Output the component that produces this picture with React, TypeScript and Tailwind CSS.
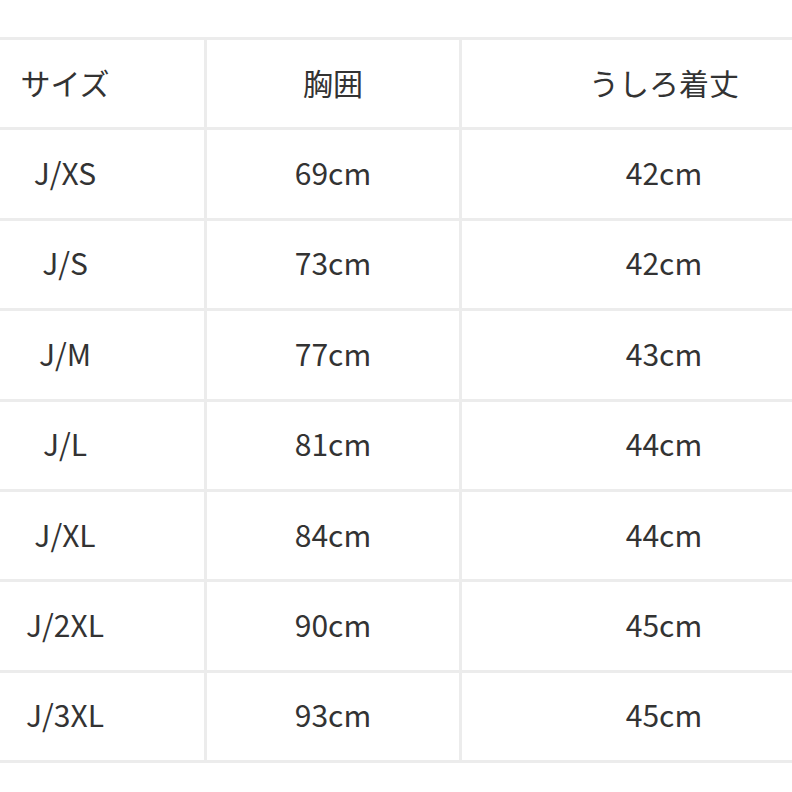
import React from "react";

const rows: [string, string, string][] = [
  ["J/XS", "69cm", "42cm"],
  ["J/S", "73cm", "42cm"],
  ["J/M", "77cm", "43cm"],
  ["J/L", "81cm", "44cm"],
  ["J/XL", "84cm", "44cm"],
  ["J/2XL", "90cm", "45cm"],
  ["J/3XL", "93cm", "45cm"],
];

function Row({ cells }: { cells: [string, string, string] }) {
  return (
    <div className="flex h-[87.375px] border-b-[3px] border-[#ececec] box-content">
      <div className="w-[278px] pb-1 flex items-center justify-center border-r-[3px] border-[#ececec] box-content">
        {cells[0]}
      </div>
      <div className="w-[252px] pb-1 flex items-center justify-center border-r-[3px] border-[#ececec] box-content">
        {cells[1]}
      </div>
      <div className="w-[404px] pb-1 flex items-center justify-center">{cells[2]}</div>
    </div>
  );
}

export default function App() {
  return (
    <div
      className="w-[792px] h-[792px] overflow-hidden bg-white text-[#333333] text-[30px] leading-none"
      style={{ fontFamily: '"Noto Sans CJK JP", sans-serif' }}
    >
      <div className="ml-[-74px] w-[940px] mt-[37px] border-t-[3px] border-[#ececec]">
        <Row cells={["サイズ", "胸囲", "うしろ着丈"]} />
        {rows.map((r) => (
          <Row key={r[0]} cells={r} />
        ))}
      </div>
    </div>
  );
}
